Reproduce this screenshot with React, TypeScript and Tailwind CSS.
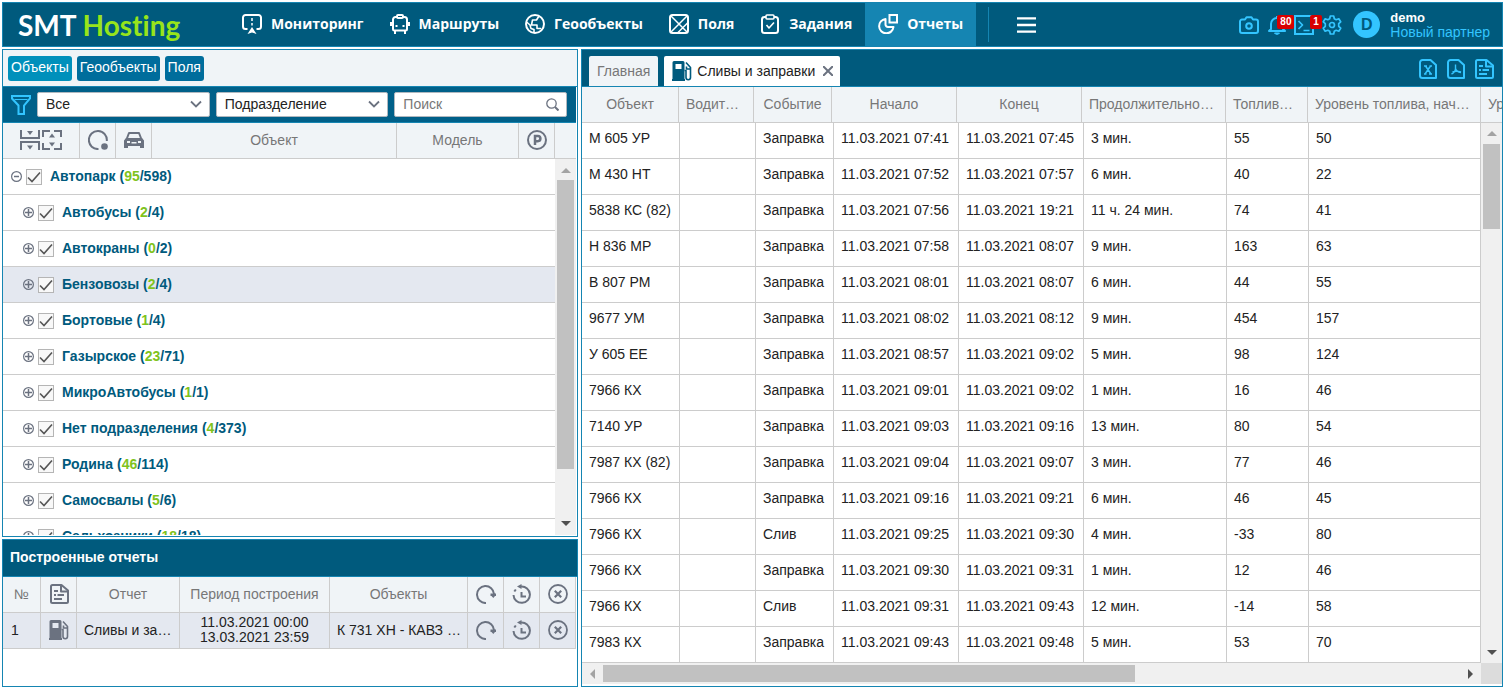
import type { ReactNode } from "react";
import clsx from "clsx";

type IconProps = { className?: string };

const Svg = ({
  className = "size-5",
  children,
  box = "0 0 20 20",
}: IconProps & { children: ReactNode; box?: string }) => (
  <svg
    viewBox={box}
    className={clsx("shrink-0", className)}
    fill="none"
    stroke="currentColor"
    strokeWidth="2"
    strokeLinejoin="round"
    aria-hidden="true"
  >
    {children}
  </svg>
);

const MonitoringIcon = () => (
  <Svg>
    <path d="M5.500 15H3.500A2.500 2.500 0 0 1 1 12.500V3.500A2.500 2.500 0 0 1 3.500 1h13A2.500 2.500 0 0 1 19 3.500v9a2.500 2.500 0 0 1-2.500 2.500H14.500" />
    <path d="M10 4v3M10 9v2.500" strokeWidth="1.500" />
    <path d="M10 13l4.500 7-4.500-1.500L5.500 20z" fill="currentColor" stroke="none" />
  </Svg>
);

const RouteIcon = () => (
  <Svg>
    <path d="M7 3H5.500A2.500 2.500 0 0 0 3 5.500V15a1.500 1.500 0 0 0 1.500 1.500h11A1.500 1.500 0 0 0 17 15V5.500A2.500 2.500 0 0 0 14.500 3H13" />
    <rect x="7" y="1" width="6" height="3" rx="1" />
    <path d="M1 8v4M19 8v4M5 16.500V20M15 16.500V20" />
    <path d="M5.500 12h2M12.500 12h2" />
  </Svg>
);

const GlobeIcon = () => (
  <Svg>
    <circle cx="10" cy="10" r="9" />
    <path
      d="M14 2l-2.500 4H7.500l-1 5h5.500v3.500h4M1 7.500l4 3.500 1 3.500 3 1V19"
      strokeWidth="1.600"
    />
  </Svg>
);

const FieldIcon = () => (
  <Svg>
    <rect x="1" y="1" width="18" height="18" rx="2.500" />
    <path d="M2 2l16 16M18 2L2 18M19 8.500L8.500 19" strokeWidth="1.500" />
  </Svg>
);

const TaskIcon = () => (
  <Svg>
    <rect x="2" y="3" width="16" height="16" rx="2.500" />
    <rect x="6" y="1" width="8" height="4" rx="1" fill="#005a7d" strokeWidth="1.600" />
    <path d="M6.500 11l2.500 3 5-5.500" strokeWidth="1.600" />
  </Svg>
);

const PieIcon = () => (
  <Svg>
    <path d="M11.500 1h7.500v7.500h-7.500z" strokeLinejoin="miter" />
    <path d="M7.500 5A7.200 7.200 0 1 0 15.500 13H10a2.500 2.500 0 0 1-2.500-2.500z" />
  </Svg>
);

const CameraIcon = () => (
  <Svg>
    <path d="M3 4.500h3l1.500-2.200h5L14 4.500h3a2 2 0 0 1 2 2V16a2 2 0 0 1-2 2H3a2 2 0 0 1-2-2V6.500a2 2 0 0 1 2-2z" />
    <circle cx="10" cy="11" r="2.800" />
  </Svg>
);

const BellIcon = () => (
  <Svg>
    <path d="M10 1v2M4 14V9a6 6 0 0 1 12 0v5l2 2H2z" />
    <path d="M7.500 18c.5 1.800 4.500 1.800 5 0z" fill="currentColor" strokeWidth="1" />
  </Svg>
);

const TerminalIcon = () => (
  <Svg>
    <path d="M1 1h18v18H1z" strokeLinejoin="miter" />
    <path d="M4.500 6l4 4-4 4M9.500 15.500h6" strokeWidth="1.700" />
  </Svg>
);

const GearIcon = () => (
  <Svg>
    <path
      d="M8.300 1h3.400l.6 2.700 1.900 1 2.600-.9 1.900 3-2 1.900v2.600l2 1.900-1.900 3-2.600-.9-1.900 1-.6 2.700H8.300l-.6-2.700-1.900-1-2.600.9-1.900-3 2-1.900V8.700l-2-1.900 1.900-3 2.600.9 1.900-1z"
      strokeWidth="1.700"
    />
    <circle cx="10" cy="10" r="2.500" strokeWidth="1.700" />
  </Svg>
);

const FilePage = () => (
  <path d="M12.500 1H4.500A2.500 2.500 0 0 0 2 3.500v13A2.500 2.500 0 0 0 4.500 19h13.500V6z" />
);

const ExcelIcon = () => (
  <Svg>
    <FilePage />
    <path d="M7.500 7l5.500 8M12.500 7L7 15M6 7h3M11.500 7H14M6 15h2.500M11 15h3" strokeWidth="1.500" />
  </Svg>
);

const PdfIcon = () => (
  <Svg>
    <FilePage />
    <path
      d="M9.500 5.500v4c0 2.500-2 4.500-4 5.500M9.500 9.500c.5 2 2.500 3.500 5.500 4M6.500 13c2.500-1 5-1 8.500 0"
      strokeWidth="1.400"
    />
  </Svg>
);

const ReportIcon = () => (
  <Svg>
    <path d="M12.500 1H3.500A1.500 1.500 0 0 0 2 2.500v15A1.500 1.500 0 0 0 3.500 19h14A1.500 1.500 0 0 0 19 17.500V6.500z" />
    <path d="M12 1v6.500h6.500M5 7h4M5 11h2M8.500 11H15M5 15h8" />
  </Svg>
);

const FunnelIcon = () => (
  <Svg>
    <path d="M1 1h18v2.500l-6 7V19H7.500v-8.500L1 3.500z" strokeLinejoin="miter" />
    <path d="M3.500 4.500h13" strokeWidth="1" />
  </Svg>
);

const CollapseIcons = () => (
  <Svg className="h-5 w-[42px]" box="0 0 42 20">
    <path
      d="M1 0v8h18V0M1 20v-8h18v8M23 7V1h7M34 1h7v6M23 13v6h7M34 19h7v-6"
      strokeLinejoin="miter"
    />
    <path
      d="M7 1h6l-3 4zM7 15.500h6l-3 4zM29 7.500h6l-3-4zM29 12.500h6l-3 4z"
      fill="currentColor"
      stroke="none"
    />
  </Svg>
);

const StatusIcon = () => (
  <Svg>
    <path d="M10.500 19A9 9 0 1 1 18.800 11" />
    <circle cx="16.500" cy="16.500" r="3.300" fill="currentColor" stroke="none" />
  </Svg>
);

const CarIcon = () => (
  <Svg>
    <path d="M2.500 9.500L5 3h10l2.500 6.500" />
    <path
      fillRule="evenodd"
      d="M2 8h16l2 2.500V18h-4v-2H4v2H0v-7.500zM3 11v2h3v-2zM14 11v2h3v-2zM7.500 12v1.500h5V12z"
      fill="currentColor"
      stroke="none"
    />
  </Svg>
);

const ParkingIcon = () => (
  <Svg>
    <circle cx="10" cy="10" r="9" />
    <path
      d="M8 15V6h2.800a2.500 2.500 0 0 1 0 5.200H8"
      strokeWidth="2.500"
      strokeLinejoin="miter"
    />
  </Svg>
);

const FuelIcon = () => (
  <Svg>
    <path
      fillRule="evenodd"
      d="M2 0h9a1.500 1.500 0 0 1 1.500 1.500V18H13v2H0v-2h.5V1.500A1.500 1.500 0 0 1 2 0zM3.500 3v5h6V3z"
      fill="currentColor"
      stroke="none"
    />
    <path d="M12.500 9.500h1.500v7a2 2 0 0 0 4.500 0v-10l-4.500-5M14.500 5.500v2.500h4" strokeWidth="1.600" />
  </Svg>
);

const RepeatIcon = () => (
  <Svg>
    <path d="M10 19A8.500 8.500 0 1 1 18 10" />
    <path d="M14.500 9.500H20v2.500h-1l-1.700 2-1.800-2h-1z" fill="currentColor" stroke="none" />
  </Svg>
);

const HistoryIcon = () => (
  <Svg>
    <path d="M9 2.500a8.200 8.200 0 1 1-7.500 8.500" />
    <path d="M5 2.500L9.500 0v5z" fill="currentColor" stroke="none" />
    <path d="M9.500 8v4.500H14" strokeLinejoin="miter" />
    <path d="M3.800 5.500L2.300 7.500" />
  </Svg>
);

const CancelIcon = () => (
  <Svg>
    <circle cx="10" cy="10" r="9" strokeWidth="1.800" />
    <path d="M6.800 6.800l6.400 6.400M13.200 6.800l-6.400 6.400" strokeWidth="2.200" />
  </Svg>
);

const ChevronDown = () => (
  <svg
    viewBox="0 0 12 8"
    className="pointer-events-none absolute top-2 right-2 h-2 w-3"
    fill="none"
    stroke="#6b7280"
    strokeWidth="1.8"
    aria-hidden="true"
  >
    <path d="M1 1.500l5 5 5-5" />
  </svg>
);

const Arrow = ({ d, muted }: { d: string; muted?: boolean }) => (
  <svg
    viewBox="0 0 10 10"
    className={clsx("size-[10px]", muted ? "fill-[#a3a3a3]" : "fill-[#505050]")}
    aria-hidden="true"
  >
    <path d={d} />
  </svg>
);

const UP = "M0 7l5-5 5 5z";
const DOWN = "M0 3h10l-5 5z";
const LEFT = "M7 0v10L2 5z";
const RIGHT = "M3 0v10l5-5z";

const navItems = [
  { label: "Мониторинг", icon: <MonitoringIcon /> },
  { label: "Маршруты", icon: <RouteIcon /> },
  { label: "Геообъекты", icon: <GlobeIcon /> },
  { label: "Поля", icon: <FieldIcon /> },
  { label: "Задания", icon: <TaskIcon /> },
  { label: "Отчеты", icon: <PieIcon />, active: true },
];

const groups = [
  { name: "Автопарк", on: 95, total: 598, root: true },
  { name: "Автобусы", on: 2, total: 4 },
  { name: "Автокраны", on: 0, total: 2 },
  { name: "Бензовозы", on: 2, total: 4, selected: true },
  { name: "Бортовые", on: 1, total: 4 },
  { name: "Газырское", on: 23, total: 71 },
  { name: "МикроАвтобусы", on: 1, total: 1 },
  { name: "Нет подразделения", on: 4, total: 373 },
  { name: "Родина", on: 46, total: 114 },
  { name: "Самосвалы", on: 5, total: 6 },
  { name: "Сельхозники", on: 18, total: 18 },
];

const day = "11.03.2021";
const events = [
  ["М 605 УР", "Заправка", "07:41", "07:45", "3 мин.", "55", "50"],
  ["М 430 НТ", "Заправка", "07:52", "07:57", "6 мин.", "40", "22"],
  ["5838 КС (82)", "Заправка", "07:56", "19:21", "11 ч. 24 мин.", "74", "41"],
  ["Н 836 МР", "Заправка", "07:58", "08:07", "9 мин.", "163", "63"],
  ["В 807 РМ", "Заправка", "08:01", "08:07", "6 мин.", "44", "55"],
  ["9677 УМ", "Заправка", "08:02", "08:12", "9 мин.", "454", "157"],
  ["У 605 ЕЕ", "Заправка", "08:57", "09:02", "5 мин.", "98", "124"],
  ["7966 КХ", "Заправка", "09:01", "09:02", "1 мин.", "16", "46"],
  ["7140 УР", "Заправка", "09:03", "09:16", "13 мин.", "80", "54"],
  ["7987 КХ (82)", "Заправка", "09:04", "09:07", "3 мин.", "77", "46"],
  ["7966 КХ", "Заправка", "09:16", "09:21", "6 мин.", "46", "45"],
  ["7966 КХ", "Слив", "09:25", "09:30", "4 мин.", "-33", "80"],
  ["7966 КХ", "Заправка", "09:30", "09:31", "1 мин.", "12", "46"],
  ["7966 КХ", "Слив", "09:31", "09:43", "12 мин.", "-14", "58"],
  ["7983 КХ", "Заправка", "09:43", "09:48", "5 мин.", "53", "70"],
];

const Badge = ({ className, children }: IconProps & { children: ReactNode }) => (
  <span
    className={clsx(
      "absolute top-0 block rounded-xs bg-[#d80000] px-[3px] font-bold text-[10px] text-white leading-[14px]",
      className,
    )}
  >
    {children}
  </span>
);

const Header = () => (
  <header className="flex h-[45px] shrink-0 border border-[#1585b2] bg-[#005a7d] text-white">
    <a
      href="#"
      className="flex w-[226px] items-center pl-[15px] font-['Lato',sans-serif] font-bold text-[28px] leading-none [font-variant-ligatures:none]"
    >
      SMT&nbsp;<span className="text-[#97e41b]">Hosting</span>
    </a>
    <nav className="flex">
      {navItems.map((item) => (
        <a
          key={item.label}
          href="#"
          className={clsx(
            "flex items-center gap-[9px] px-[13px] pb-px font-bold font-['Open_Sans',sans-serif] text-sm",
            item.active && "bg-[#1585b2]",
          )}
        >
          {item.icon}
          {item.label}
        </a>
      ))}
    </nav>
    <div className="my-1 ml-3 w-px bg-[#1585b2]" />
    <button type="button" aria-label="Меню" className="ml-7">
      <Svg className="h-5 w-[19px]">
        <path d="M0 3h20M0 10h20M0 17h20" strokeWidth="2.500" />
      </Svg>
    </button>
    <div className="ml-auto flex items-center pr-3 text-[#33c5ff]">
      <button type="button" aria-label="Камера" className="mr-2">
        <CameraIcon />
      </button>
      <button type="button" aria-label="Уведомления" className="relative mr-[7px]">
        <BellIcon />
        <Badge className="left-[10px]">80</Badge>
      </button>
      <button type="button" aria-label="Команды" className="relative mr-2">
        <TerminalIcon />
        <Badge className="left-4">1</Badge>
      </button>
      <button type="button" aria-label="Настройки">
        <GearIcon />
      </button>
      <span className="ml-[11px] flex size-[27px] items-center justify-center rounded-full bg-[#33c5ff] font-bold text-[#005a7d] text-base">
        D
      </span>
      <div className="ml-[10px] text-sm leading-[15px]">
        <div className="font-bold text-[13px] text-white">demo</div>
        <div>Новый партнер</div>
      </div>
    </div>
  </header>
);

const FilterSelect = ({ label, value }: { label: string; value: string }) => (
  <div className="relative flex-1">
    <select
      aria-label={label}
      className="block h-[25px] w-full appearance-none rounded-xs border border-[#b0b8bf] bg-white px-2 text-[#222] text-sm leading-[15px]"
    >
      <option>{value}</option>
    </select>
    <ChevronDown />
  </div>
);

const GroupRow = ({ group }: { group: (typeof groups)[number] }) => (
  <li
    className={clsx(
      "flex h-9 items-center border-[#ccc] border-b",
      group.root ? "pl-2" : "pl-5",
      group.selected && "bg-[#e4e8f0]",
    )}
  >
    <button
      type="button"
      aria-label={group.root ? "Свернуть" : "Развернуть"}
      className="text-[#6b7280]"
    >
      <Svg className="size-[11px]" box="0 0 11 11">
        <circle cx="5.5" cy="5.5" r="4.900" strokeWidth="1.200" />
        <path d={group.root ? "M3 5.500h5" : "M2 5.500h7M5.500 2v7"} strokeWidth="1.500" />
      </Svg>
    </button>
    <label className="ml-1 flex items-center gap-2 font-bold text-[#005a7d] text-sm">
      <span className="relative size-4">
        <input
          type="checkbox"
          defaultChecked
          className="peer block size-4 appearance-none border border-[#b5b5b5] bg-[#f8f8f8]"
        />
        <svg
          viewBox="0 0 16 16"
          className="pointer-events-none absolute inset-0 hidden size-4 peer-checked:block"
          fill="none"
          stroke="#555"
          strokeWidth="1.600"
          aria-hidden="true"
        >
          <path d="M2 8.500L6 12.500 14 3.500" />
        </svg>
      </span>
      <span className="pb-[2px]">
        {group.name} (<span className="text-[#7fc31c]">{group.on}</span>/{group.total})
      </span>
    </label>
  </li>
);

const headCell = "border-[#ccc] border-r flex items-center justify-center pb-px";

const tabButton = "h-[25px] rounded-[3px] px-[3px] pb-[2px]";

const ObjectsPanel = () => (
  <section className="flex min-h-0 flex-1 flex-col border border-[#1585b2] bg-white">
    <div className="flex h-[37px] shrink-0 items-center gap-[5px] border-[#1585b2] border-b bg-[#f0f4f7] px-[5px] text-sm text-white">
      <button type="button" className={clsx(tabButton, "bg-[#0090bb]")}>
        Объекты
      </button>
      <button type="button" className={clsx(tabButton, "bg-[#006d9c]")}>
        Геообъекты
      </button>
      <button type="button" className={clsx(tabButton, "bg-[#006d9c]")}>
        Поля
      </button>
    </div>
    <div className="mr-px flex h-9 shrink-0 items-center gap-[6px] border-[#1585b2] border-b bg-[#006089] pr-[9px] pl-2">
      <button type="button" aria-label="Фильтр" className="text-[#33c5ff]">
        <FunnelIcon />
      </button>
      <FilterSelect label="Тип" value="Все" />
      <FilterSelect label="Группировка" value="Подразделение" />
      <div className="relative flex-1">
        <input
          type="search"
          aria-label="Поиск"
          placeholder="Поиск"
          className="block h-[25px] w-full rounded-xs border border-[#b0b8bf] bg-white px-2 pb-px text-sm placeholder:text-[#777]"
        />
        <Svg
          className="pointer-events-none absolute top-[6px] right-2 size-[13px] text-[#6b7280]"
          box="0 0 13 13"
        >
          <circle cx="5.500" cy="5.500" r="4.700" strokeWidth="1.300" />
          <path d="M9 9l3.500 3.500" />
        </Svg>
      </div>
    </div>
    <div className="mr-px flex h-9 shrink-0 border-[#ccc] border-b bg-[#f0f4f7] text-[#6b7280] text-sm">
      <div className={clsx(headCell, "w-[77px]")}>
        <CollapseIcons />
      </div>
      <div className={clsx(headCell, "w-9")}>
        <StatusIcon />
      </div>
      <div className={clsx(headCell, "w-9")}>
        <CarIcon />
      </div>
      <div className={clsx(headCell, "flex-1 text-[#777]")}>Объект</div>
      <div className={clsx(headCell, "w-[122px] text-[#777]")}>Модель</div>
      <div className={clsx(headCell, "w-9")}>
        <ParkingIcon />
      </div>
      <div className="w-[21px]" />
    </div>
    <div className="mr-px mb-px flex min-h-0 flex-1">
      <ul className="min-w-0 flex-1 overflow-hidden">
        {groups.map((g) => (
          <GroupRow key={g.name} group={g} />
        ))}
      </ul>
      <div className="flex w-[21px] flex-col items-center bg-[#f0f0f0] py-[7px]">
        <Arrow d={UP} muted />
        <div className="mt-1 h-[289px] w-[17px] bg-[#c1c1c1]" />
        <div className="mt-auto flex">
          <Arrow d={DOWN} />
        </div>
      </div>
    </div>
  </section>
);

const smallHead = "border-[#ccc] border-r border-b font-normal px-2 pb-[2px] truncate";
const smallIcon = "border-[#ccc] border-r border-b pb-px text-[#6b7280]";

const IconButton = ({ label, children }: { label: string; children: ReactNode }) => (
  <button type="button" aria-label={label} className="mx-auto flex">
    {children}
  </button>
);

const BuiltReports = () => (
  <section className="h-[148px] shrink-0 border border-[#1585b2] bg-white">
    <h2 className="flex h-[37px] items-center border-[#1585b2] border-b bg-[#005a7d] px-[7px] pb-[2px] font-bold text-sm text-white">
      Построенные отчеты
    </h2>
    <div className="mr-px">
      <table className="w-full table-fixed border-separate border-spacing-0 text-sm">
        <colgroup>
          <col className="w-[38px]" />
          <col className="w-9" />
          <col className="w-[103px]" />
          <col className="w-[150px]" />
          <col />
          <col className="w-9" />
          <col className="w-9" />
          <col className="w-9" />
        </colgroup>
        <thead>
          <tr className="h-9 bg-[#f0f4f7] text-[#777]">
            <th className={smallHead}>№</th>
            <th className={smallIcon}>
              <IconButton label="Вид отчета"><ReportIcon /></IconButton>
            </th>
            <th className={smallHead}>Отчет</th>
            <th className={smallHead}>Период построения</th>
            <th className={smallHead}>Объекты</th>
            <th className={smallIcon}>
              <IconButton label="Обновить все"><RepeatIcon /></IconButton>
            </th>
            <th className={smallIcon}>
              <IconButton label="История"><HistoryIcon /></IconButton>
            </th>
            <th className={smallIcon}>
              <IconButton label="Удалить все"><CancelIcon /></IconButton>
            </th>
          </tr>
        </thead>
        <tbody>
          <tr className="h-9 bg-[#e4e8f0] text-[#222]">
            <td className="border-[#ccc] border-r border-b px-2 pb-[2px]">1</td>
            <td className={smallIcon}>
              <IconButton label="Сливы и заправки"><FuelIcon /></IconButton>
            </td>
            <td className="truncate border-[#ccc] border-r border-b px-[7px] pb-[2px]">
              Сливы и заправки
            </td>
            <td className="border-[#ccc] border-r border-b pb-[2px] text-center leading-[15px]">
              11.03.2021 00:00
              <br />
              13.03.2021 23:59
            </td>
            <td className="truncate border-[#ccc] border-r border-b pr-1 pb-[2px] pl-[7px]">
              К 731 ХН - КАВЗ 4238
            </td>
            <td className={smallIcon}>
              <IconButton label="Обновить"><RepeatIcon /></IconButton>
            </td>
            <td className={smallIcon}>
              <IconButton label="Перестроить"><HistoryIcon /></IconButton>
            </td>
            <td className={smallIcon}>
              <IconButton label="Удалить"><CancelIcon /></IconButton>
            </td>
          </tr>
        </tbody>
      </table>
    </div>
  </section>
);

const bigHead = "truncate border-[#ccc] border-r border-b px-[7px] pb-[2px] font-normal";

const ReportPanel = () => (
  <main className="flex min-w-0 flex-1 flex-col border border-[#1585b2] bg-white">
    <div className="flex h-[37px] shrink-0 items-end border-[#1585b2] border-b bg-[#005a7d] pl-[7px] text-sm">
      <button
        type="button"
        className="mr-[6px] h-[30px] rounded-t-xs bg-[#f0f4f7] px-2 text-[#777]"
      >
        Главная
      </button>
      <div className="flex h-[30px] items-center rounded-t-xs bg-white pr-[7px] pl-2 text-[#005a7d]">
        <FuelIcon />
        <span className="ml-[5px] pb-px text-[#222]">Сливы и заправки</span>
        <button type="button" aria-label="Закрыть" className="ml-2 text-[#6b7280]">
          <Svg className="size-[10px]" box="0 0 10 10">
            <path d="M0 0l10 10M10 0L0 10" />
          </Svg>
        </button>
      </div>
      <div className="mr-2 ml-auto flex h-9 items-center gap-2 pt-px text-[#33c5ff]">
        <button type="button" aria-label="Excel"><ExcelIcon /></button>
        <button type="button" aria-label="PDF"><PdfIcon /></button>
        <button type="button" aria-label="Отчет"><ReportIcon /></button>
      </div>
    </div>
    <table className="w-full shrink-0 table-fixed border-separate border-spacing-0 text-sm">
      <colgroup>
        <col className="w-[97px]" />
        <col className="w-[75px]" />
        <col className="w-[78px]" />
        <col className="w-[125px]" />
        <col className="w-[125px]" />
        <col className="w-[144px]" />
        <col className="w-[82px]" />
        <col />
        <col className="w-[21px]" />
      </colgroup>
      <thead>
        <tr className="h-9 bg-[#f0f4f7] text-[#777]">
          <th className={bigHead}>Объект</th>
          <th className={bigHead}>Водитель, ФИО</th>
          <th className={bigHead}>Событие</th>
          <th className={bigHead}>Начало</th>
          <th className={bigHead}>Конец</th>
          <th className={bigHead}>Продолжительность</th>
          <th className={bigHead}>Топливо, л</th>
          <th className={bigHead}>Уровень топлива, нач., л</th>
          <th className="overflow-hidden whitespace-nowrap border-[#ccc] border-b pb-[2px] pl-[7px] text-left font-normal">
            Ур
          </th>
        </tr>
      </thead>
    </table>
    <div className="flex min-h-0 flex-1">
      <div className="min-w-0 flex-1 overflow-hidden">
        <table className="w-full table-fixed border-separate border-spacing-0 text-[#222] text-sm">
          <colgroup>
            <col className="w-[98px]" />
            <col className="w-[76px]" />
            <col className="w-[78px]" />
            <col className="w-[125px]" />
            <col className="w-[125px]" />
            <col className="w-[143px]" />
            <col className="w-[82px]" />
            <col />
          </colgroup>
          <tbody>
            {events.map(([car, type, from, to, time, fuel, level]) => (
              <tr key={car + from} className="h-9">
                {[car, "", type, `${day} ${from}`, `${day} ${to}`, time, fuel, level].map(
                  (text, i) => (
                    <td
                      key={i}
                      className="whitespace-nowrap border-[#ccc] border-r border-b px-[7px] pt-[7px] align-top leading-4"
                    >
                      {text}
                    </td>
                  ),
                )}
              </tr>
            ))}
          </tbody>
        </table>
      </div>
      <div className="flex w-[21px] flex-col items-center bg-[#f0f0f0] py-[6px]">
        <Arrow d={UP} muted />
        <div className="mt-[5px] h-[85px] w-[17px] bg-[#c1c1c1]" />
        <div className="mt-auto flex">
          <Arrow d={DOWN} />
        </div>
      </div>
    </div>
    <div className="mb-[2px] flex h-[21px] shrink-0 bg-[#f0f0f0]">
      <div className="flex flex-1 items-center px-[6px]">
        <Arrow d={LEFT} muted />
        <div className="ml-[5px] h-[17px] w-[60%] bg-[#c1c1c1]" />
        <div className="ml-auto flex">
          <Arrow d={RIGHT} />
        </div>
      </div>
      <div className="w-[21px] bg-[#dcdcdc]" />
    </div>
  </main>
);

export default function App() {
  return (
    <div className="flex h-screen flex-col gap-[2px] bg-white p-[2px] font-['Liberation_Sans',Arial,sans-serif]">
      <Header />
      <div className="flex min-h-0 flex-1 gap-[3px]">
        <div className="flex w-[576px] shrink-0 flex-col gap-[2px]">
          <ObjectsPanel />
          <BuiltReports />
        </div>
        <ReportPanel />
      </div>
    </div>
  );
}
